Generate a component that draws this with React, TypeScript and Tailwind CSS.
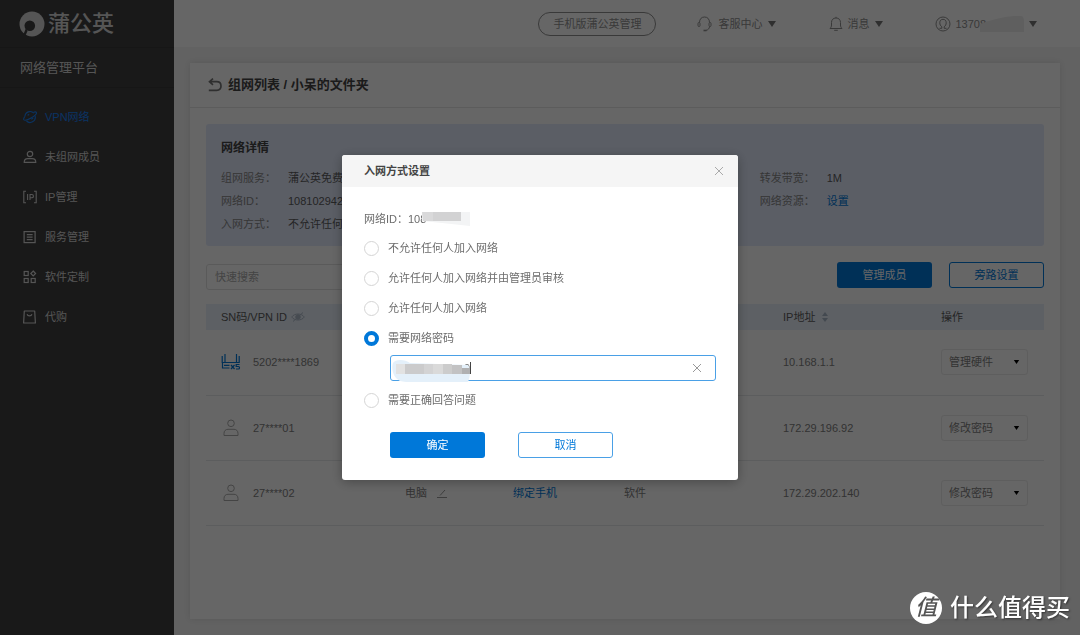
import React, { useState } from 'react';

type IconProps = { className?: string };

const PlanetIcon: React.FC<IconProps> = ({ className }) => (
  <svg viewBox="0 0 14 14" fill="none" stroke="currentColor" strokeWidth="1.1" className={className}>
    <path d="M1.900 6.500A5.200 5.200 0 0 1 10.900 3.200M12.200 6.200A5.200 5.200 0 0 1 3.400 10.900" />
    <path d="M10.600 2.300c1.500-.6 2.500-.5 2.800.1.500 1.100-1.500 3.500-4.900 5.400C5 9.800 1.500 10.700.8 9.700c-.4-.7.1-1.900 1.100-3.200" />
    <path d="M4.600 5.300l1.600-.9M8.300 9.300l2-1.200" />
  </svg>
);

const MemberIcon: React.FC<IconProps> = ({ className }) => (
  <svg viewBox="0 0 14 14" fill="none" stroke="currentColor" strokeWidth="1.2" className={className}>
    <circle cx="7" cy="4" r="2.7" />
    <path d="M1.200 12.400c0-2.500 1.600-3.800 3.600-3.800h4.400c2 0 3.600 1.300 3.600 3.800z" strokeLinejoin="round" />
  </svg>
);

const IpIcon: React.FC<IconProps> = ({ className }) => (
  <svg viewBox="0 0 14 14" fill="none" stroke="currentColor" strokeWidth="1.1" className={className}>
    <path d="M3 1.200H.8v11.600H3M11 1.200h2.200v11.600H11M4.600 4v6M7 10V4.500h1.800a1.600 1.600 0 0 1 0 3.300H7" />
  </svg>
);

const ServiceIcon: React.FC<IconProps> = ({ className }) => (
  <svg viewBox="0 0 14 14" fill="none" stroke="currentColor" strokeWidth="1.2" className={className}>
    <rect x="1.100" y="1.600" width="11" height="11" />
    <path d="M3.800 4.600h5.800M3.800 7.100h5.800M3.800 9.600h5.800" />
  </svg>
);

const AppsIcon: React.FC<IconProps> = ({ className }) => (
  <svg viewBox="0 0 14 14" fill="none" stroke="currentColor" strokeWidth="1.2" className={className}>
    <rect x="1.200" y="1.500" width="4" height="4" />
    <rect x="1.200" y="8.500" width="4" height="4" />
    <rect x="8.200" y="8.500" width="4" height="4" />
    <path d="M10.200 1l2.400 2.500-2.400 2.500-2.400-2.500z" />
  </svg>
);

const BagIcon: React.FC<IconProps> = ({ className }) => (
  <svg viewBox="0 0 14 14" fill="none" stroke="currentColor" strokeWidth="1.2" className={className}>
    <path d="M1.300 1h10.400l.7 12H.6z" strokeLinejoin="round" />
    <path d="M4.100 4.300c.7 2.200 4.100 2.200 4.800 0" />
  </svg>
);

const HeadsetIcon: React.FC<IconProps> = ({ className }) => (
  <svg viewBox="0 0 15 16" fill="none" stroke="currentColor" className={className}>
    <path d="M2.500 6.500C2.500 3 4.500 1 7.500 1s5 2 5 5.500M12.600 10.500c-.3 2.200-1.600 3.500-3.600 3.900" />
    <rect x="1" y="6.500" width="2" height="4" rx="1" />
    <rect x="12" y="6.500" width="2" height="4" rx="1" />
    <path d="M6.500 14.500h3" strokeWidth="1.600" />
  </svg>
);

const BellIcon: React.FC<IconProps> = ({ className }) => (
  <svg viewBox="0 0 14 16" fill="none" stroke="currentColor" className={className}>
    <path d="M1 12.500h12c-1-1-1.500-2-1.500-3.500V6.500C11.500 3.800 9.800 2 7 2S2.500 3.800 2.500 6.500V9c0 1.500-.5 2.500-1.500 3.500z" strokeLinejoin="round" />
    <path d="M7 .8V2M5.200 14.300h3.600" />
  </svg>
);

const AccountIcon: React.FC<IconProps> = ({ className }) => (
  <svg viewBox="0 0 16 16" fill="none" stroke="currentColor" className={className}>
    <circle cx="8" cy="8" r="7" />
    <path d="M4.500 12.300h2.300v-1.500C5.500 9.800 4.800 8.500 4.800 6.800c0-2.200 1.200-3.500 3.200-3.500s3.200 1.300 3.200 3.500c0 1.700-.7 3-2 4v1.500h2.300" />
  </svg>
);

const BackIcon: React.FC<IconProps> = ({ className }) => (
  <svg viewBox="0 0 14 14" fill="none" stroke="currentColor" strokeWidth="1.700" className={className}>
    <path d="M5 .6L1.500 3.700 5 6.800M1.800 3.700h6.900c2.600 0 4.300 1.700 4.300 4.300s-1.700 4.300-4.300 4.300H.8" />
  </svg>
);

const RouterIcon: React.FC<IconProps> = ({ className }) => (
  <svg viewBox="0 0 20 18" fill="none" stroke="currentColor" strokeWidth="1.200" className={className}>
    <path d="M1.200 3v6.500h17V3M4 1v8.500M15.500 1v8.500M1.500 10v5h7M3 12.300h5.500" />
    <path d="M10 12l3.500 4M13.500 12L10 16M18.500 11.500h-3.300v2h2.200c1.500 0 1.500 2.500 0 2.500H15" />
  </svg>
);

const PersonIcon: React.FC<IconProps> = ({ className }) => (
  <svg viewBox="0 0 16 18" fill="none" stroke="currentColor" className={className}>
    <circle cx="8" cy="4.300" r="3.300" />
    <path d="M1 16.500v-2c0-2.600 1.600-4.200 4-4.200h6c2.400 0 4 1.600 4 4.200v2z" strokeLinejoin="round" />
  </svg>
);

const EyeOffIcon: React.FC<IconProps> = ({ className }) => (
  <svg viewBox="0 0 14 10" fill="none" stroke="currentColor" className={className}>
    <path d="M.7 5C3.500 1 10.500 1 13.300 5 10.500 9 3.500 9 .7 5z" />
    <circle cx="7" cy="5" r="2.300" fill="currentColor" />
    <path d="M2 9.500L12 .5" />
  </svg>
);

const CloseIcon: React.FC<IconProps> = ({ className }) => (
  <svg viewBox="0 0 10 10" fill="none" stroke="currentColor" className={className}>
    <path d="M1 1l8 8M9 1L1 9" />
  </svg>
);

const Caret: React.FC<IconProps> = ({ className }) => (
  <svg viewBox="0 0 8 6" fill="currentColor" className={className}>
    <path d="M0 0h8L4 6z" />
  </svg>
);

const navItems = [
  { icon: PlanetIcon, label: 'VPN网络', active: true },
  { icon: MemberIcon, label: '未组网成员' },
  { icon: IpIcon, label: 'IP管理' },
  { icon: ServiceIcon, label: '服务管理' },
  { icon: AppsIcon, label: '软件定制' },
  { icon: BagIcon, label: '代购' },
];

const members = [
  { id: '5202****1869', ip: '10.168.1.1', action: '管理硬件', router: true },
  { id: '27****01', ip: '172.29.196.92', action: '修改密码' },
  { id: '27****02', ip: '172.29.202.140', action: '修改密码', device: '电脑', bind: '绑定手机', kind: '软件' },
];

const joinModes = ['不允许任何人加入网络', '允许任何人加入网络并由管理员审核', '允许任何人加入网络', '需要网络密码', '需要正确回答问题'];

const Sidebar: React.FC = () => (
  <aside className="w-[174px] shrink-0 bg-[#3f3f3f] text-[#d4d4d4]">
    <div className="flex h-12 items-center gap-[3px] border-b border-[#383838] pl-[19px]">
      <svg viewBox="0 0 26 26" className="h-[26px] w-[26px]">
        <circle cx="13" cy="13" r="12.500" fill="currentColor" />
        <circle cx="10.800" cy="14.800" r="5.300" fill="#3f3f3f" />
        <path d="M6.800 17.500L8.500 20 6.300 25 4.500 23.200z" fill="#3f3f3f" />
      </svg>
      <span className="text-[22px] leading-8 font-medium">蒲公英</span>
    </div>
    <div className="flex h-10 items-center border-b border-[#383838] pl-5 text-[13px]">网络管理平台</div>
    <nav className="pt-[9px]">
      {navItems.map((item) => (
        <a
          key={item.label}
          href="#"
          className={`flex h-10 items-center gap-2 pl-[23px] text-[11px] ${item.active ? 'text-[#1a80f4]' : ''}`}
        >
          <item.icon className="h-[14px] w-[14px]" />
          {item.label}
        </a>
      ))}
    </nav>
  </aside>
);

const TopBar: React.FC = () => (
  <header className="flex h-[47px] items-center justify-end bg-white pr-[43px] text-[11px] text-[#909090]">
    <button className="mr-[41px] h-6 rounded-full border border-[#909090] px-[14px]">手机版蒲公英管理</button>
    <button className="mr-[53px] flex items-center">
      <HeadsetIcon className="mr-[6px] h-4 w-[15px]" />
      客服中心
      <Caret className="ml-[6px] h-[6px] w-2 text-[#777]" />
    </button>
    <button className="mr-[52px] flex items-center">
      <BellIcon className="mr-1 h-4 w-[14px]" />
      消息
      <Caret className="ml-[6px] h-[6px] w-2 text-[#777]" />
    </button>
    <button className="flex items-center">
      <AccountIcon className="mr-1 h-4 w-4" />
      13708
      <svg viewBox="0 0 44 18" className="-ml-[6px] mr-[5px] h-[18px] w-11">
        <path d="M0 17V9c10-4 22-7 34-8h7c2 0 3 2 3 5v11z" fill="#eeeeee" />
      </svg>
      <Caret className="h-[6px] w-2 text-[#777]" />
    </button>
  </header>
);

const DetailRow: React.FC<{ label: string; children: React.ReactNode }> = ({ label, children }) => (
  <div className="flex leading-[23px]">
    <dt className="w-[67px] text-[#888]">{label}</dt>
    <dd className="whitespace-nowrap text-[#5c5c5c]">{children}</dd>
  </div>
);

const NetworkDetail: React.FC = () => (
  <section className="rounded-[3px] bg-[#e3ebfd] px-[15px] pt-[13px] pb-[10px]">
    <h2 className="text-xs leading-[22px] font-bold text-[#444]">网络详情</h2>
    <div className="mt-2 grid grid-cols-3">
      <dl>
        <DetailRow label="组网服务：">蒲公英免费</DetailRow>
        <DetailRow label="网络ID：">108102942</DetailRow>
        <DetailRow label="入网方式：">不允许任何</DetailRow>
      </dl>
      <dl className="col-start-3">
        <DetailRow label="转发带宽：">1M</DetailRow>
        <DetailRow label="网络资源：">
          <a href="#" className="text-[#0078d9]">设置</a>
        </DetailRow>
      </dl>
    </div>
  </section>
);

const MemberTable: React.FC = () => (
  <table className="mt-[14px] w-full table-fixed text-left">
    <thead>
      <tr className="h-[26px] bg-[#e8f0fa] text-[#5c5c5c]">
        <th className="w-[199px] pl-[15px] font-normal">
          <span className="flex items-center gap-1">
            SN码/VPN ID
            <EyeOffIcon className="h-[10px] w-[14px] text-[#b0bccb]" />
          </span>
        </th>
        <th className="w-[108px]" />
        <th className="w-[111px]" />
        <th className="w-[159px]" />
        <th className="w-[158px] font-normal">
          <span className="flex items-center gap-[6px]">
            IP地址
            <svg viewBox="0 0 8 10" fill="#a9b6c8" className="h-[10px] w-2">
              <path d="M1 4l3-4 3 4zM1 6l3 4 3-4z" />
            </svg>
          </span>
        </th>
        <th className="font-normal">操作</th>
      </tr>
    </thead>
    <tbody>
      {members.map((member) => (
        <tr key={member.id} className="h-[65px] border-b border-[#e6e8ea] text-[#808080]">
          <td className="pl-[15px]">
            <span className="flex items-center gap-3">
              {member.router ? (
                <RouterIcon className="h-[18px] w-5 text-[#0078d9]" />
              ) : (
                <span className="flex w-5 justify-center">
                  <PersonIcon className="h-[18px] w-4 text-[#aaa]" />
                </span>
              )}
              {member.id}
            </span>
          </td>
          <td>
            {member.device && (
              <span className="flex items-center gap-[10px]">
                {member.device}
                <svg viewBox="0 0 10 10" fill="none" stroke="#999" className="h-[10px] w-[10px]">
                  <path d="M0 9.500h10M3 7.500l5-5.500" />
                </svg>
              </span>
            )}
          </td>
          <td>{member.bind && <a href="#" className="text-[#0078d9]">{member.bind}</a>}</td>
          <td>{member.kind}</td>
          <td>{member.ip}</td>
          <td>
            <div className="relative w-[87px]">
              <select
                aria-label={`${member.id} 操作`}
                className="h-[26px] w-full appearance-none rounded-[3px] border border-[#ececec] bg-white px-[7px]"
              >
                <option>{member.action}</option>
              </select>
              <Caret className="pointer-events-none absolute top-[11px] right-2 h-1 w-[7px] text-black" />
            </div>
          </td>
        </tr>
      ))}
    </tbody>
  </table>
);

const JoinModeDialog: React.FC = () => {
  const [mode, setMode] = useState('需要网络密码');

  return (
    <div className="fixed inset-0 z-10 flex items-center justify-center bg-black/60">
      <div role="dialog" aria-labelledby="dialog-title" className="w-[396px] rounded-[3px] bg-white shadow-[0_2px_12px_rgba(0,0,0,0.3)]">
        <div className="flex h-8 items-center justify-between rounded-t-[3px] bg-[#f5f5f5] pr-[14px] pl-[22px]">
          <h2 id="dialog-title" className="font-bold text-[#444]">入网方式设置</h2>
          <button aria-label="关闭" className="text-[#aaa]">
            <CloseIcon className="h-[10px] w-[10px]" />
          </button>
        </div>
        <form className="px-[22px] pt-[18px] pb-[22px] text-[#6c6c6c]">
          <div className="flex h-7 items-center">
            网络ID：108
            <svg viewBox="0 0 48 16" className="-ml-1 h-4 w-12">
              <path d="M0 1h48v14L20 12 0 10z" fill="#f3f4f5" />
              <path d="M0 1h14v9H1z" fill="#d9d9da" />
              <path d="M11 1h28v9H11z" fill="#d2d2d3" />
            </svg>
          </div>
          {joinModes.map((item) => (
            <React.Fragment key={item}>
              <label className="flex h-[30px] items-center gap-[9px]">
                <input
                  type="radio"
                  name="join-mode"
                  checked={mode === item}
                  onChange={() => setMode(item)}
                  className="h-[15px] w-[15px] appearance-none rounded-full border border-[#d4d4d4] bg-white checked:border-4 checked:border-[#0078d9]"
                />
                {item}
              </label>
              {item === '需要网络密码' && (
                <div className="relative mt-[2px] mb-1 ml-[26px]">
                  <input
                    type="text"
                    aria-label="网络密码"
                    defaultValue="9"
                    className="h-[26px] w-full rounded-[3px] border border-[#4aa0e6] pr-8 pl-[73px] outline-none"
                  />
                  <svg viewBox="0 0 82 26" className="pointer-events-none absolute top-[1px] left-0 h-[26px] w-[82px]">
                    <path d="M3 7c2-4 12-4 17 0l58 2c3 4 2 13 0 17-8 2-20 0-30 0-12 1-30 1-38-1C3 22 1 12 3 7z" fill="#e4f0fa" />
                    <path d="M6 8h9v10H6z" fill="#e2e2e2" />
                    <path d="M15 8h19v10H15z" fill="#cbcbcc" />
                    <path d="M34 8h9v10h-9z" fill="#d3d3d4" />
                    <path d="M43 8h10v10H43z" fill="#dadada" />
                    <path d="M53 8h9v10h-9z" fill="#cccccc" />
                    <path d="M62 9h10v9H62z" fill="#c2c2c3" />
                    <path d="M72 12h8v6h-8z" fill="#b0b0b1" />
                    <path d="M80.500 6v12" stroke="#444" />
                  </svg>
                  <button type="button" aria-label="清空" className="absolute top-2 right-[14px] text-[#999]">
                    <CloseIcon className="h-[10px] w-[10px]" />
                  </button>
                </div>
              )}
            </React.Fragment>
          ))}
          <div className="mt-[17px] ml-[26px] flex gap-[33px]">
            <button type="button" className="h-[26px] w-[95px] rounded-[3px] bg-[#0078d9] text-white">确定</button>
            <button type="button" className="h-[26px] w-[95px] rounded-[3px] border border-[#4aa0e6] text-[#0078d9]">取消</button>
          </div>
        </form>
      </div>
    </div>
  );
};

const Watermark: React.FC = () => (
  <div className="pointer-events-none fixed right-[10px] bottom-[11px] z-20 flex items-center gap-2 text-white">
    <span className="flex h-8 w-8 items-center justify-center rounded-full bg-white text-[22px] leading-8 font-medium text-[#555] italic">值</span>
    <span className="text-2xl leading-8 font-medium [text-shadow:1px_1px_2px_rgba(0,0,0,0.5)]">什么值得买</span>
  </div>
);

const App: React.FC = () => (
  <div className="flex min-h-screen bg-[#f4f4f4] font-['Liberation_Sans','Noto_Sans_CJK_SC',sans-serif] text-[11px] leading-4">
    <Sidebar />
    <div className="flex min-w-0 flex-1 flex-col">
      <TopBar />
      <main className="mt-4 mr-5 mb-4 ml-4 flex-1 bg-white shadow-[0_0_6px_rgba(0,0,0,0.1)]">
        <div className="flex h-[45px] items-center gap-[6px] border-b border-[#e6e6e6] pl-[18px]">
          <button aria-label="返回" className="text-[#777]">
            <BackIcon className="h-[14px] w-[14px]" />
          </button>
          <h1 className="text-[13px] font-bold text-[#444]">组网列表 / 小呆的文件夹</h1>
        </div>
        <div className="px-4 pt-4">
          <NetworkDetail />
          <div className="mt-4 flex h-7 items-start">
            <input
              type="text"
              placeholder="快速搜索"
              aria-label="快速搜索"
              className="h-[26px] w-[237px] self-end rounded-[3px] border border-[#e2e2e2] px-2 placeholder:text-[#aaa]"
            />
            <button className="mr-[17px] ml-auto h-[26px] w-[95px] rounded-[3px] bg-[#0078d9] text-white">管理成员</button>
            <button className="h-[26px] w-[95px] rounded-[3px] border border-[#0078d9] text-[#0078d9]">旁路设置</button>
          </div>
          <MemberTable />
        </div>
      </main>
    </div>
    <JoinModeDialog />
    <Watermark />
  </div>
);

export default App;
